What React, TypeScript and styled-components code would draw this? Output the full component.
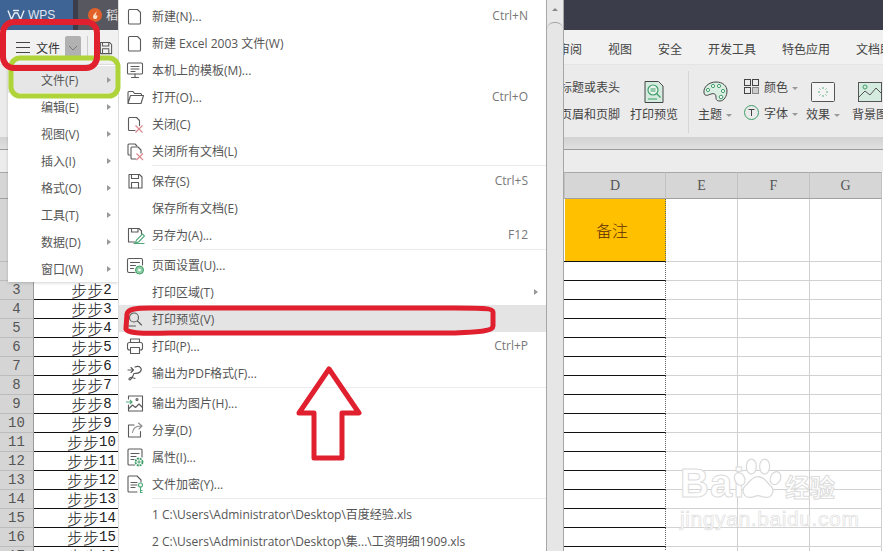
import React from 'react';
import styled, { createGlobalStyle } from 'styled-components';

const GlobalStyle = createGlobalStyle`
  html, body { margin: 0; padding: 0; background: #fff; }
  body { font-family: "Open Sans", "Noto Sans CJK SC", sans-serif; font-size: 12px; color: #555; }
`;

const Page = styled.div`
  position: relative;
  width: 887px;
  height: 551px;
  overflow: hidden;
  background: #fff;
`;

const Workspace = styled.div`
  width: 883px;
  height: 551px;
  overflow: hidden;
  display: flex;
  flex-direction: column;
`;

/* title bar */
const TitleBar = styled.div`
  height: 30px;
  flex: none;
  display: flex;
  gap: 5px;
  background: #3b3e4a;
`;

const WpsTab = styled.div`
  width: 73px;
  display: flex;
  align-items: center;
  gap: 3px;
  padding-left: 7px;
  box-sizing: border-box;
  background: #3e6495;
  color: #dfe6f0;
  font-family: "Liberation Sans", sans-serif;
  font-size: 12px;
`;

const DocTab = styled.div`
  width: 40px;
  display: flex;
  align-items: center;
  gap: 4px;
  padding-left: 10px;
  box-sizing: border-box;
  background: #56575f;
  color: #e4e4e4;
  font-size: 12px;
  white-space: nowrap;
  overflow: hidden;
`;

/* menu tabs */
const MenuTabs = styled.div`
  height: 35px;
  flex: none;
  display: flex;
  align-items: center;
  gap: 26px;
  padding: 3px 0 0 558px;
  box-sizing: border-box;
  background: #f1f1f1;
  border-bottom: 1px solid #e4e4e4;
  color: #444;
  white-space: nowrap;
`;

/* ribbon */
const Ribbon = styled.div`
  height: 72px;
  flex: none;
  display: flex;
  padding-left: 560px;
  box-sizing: border-box;
  background: #ebebeb;
  color: #444;
  white-space: nowrap;
`;

const TextStack = styled.div`
  display: flex;
  flex-direction: column;
  gap: 10px;
  padding-top: 14px;
  margin-right: 10px;
`;

const StackLabel = styled.div`
  line-height: 17px;
  display: flex;
  align-items: center;
`;

const BigButton = styled.div<{ $w: number; $mr?: number }>`
  width: ${(p) => p.$w}px;
  margin-right: ${(p) => p.$mr ?? 0}px;
  flex: none;
  display: flex;
  flex-direction: column;
  align-items: center;
  padding-top: 13px;
`;

const BigIcon = styled.div`
  height: 28px;
  display: flex;
  align-items: center;
`;

const BigLabel = styled.div`
  line-height: 18px;
  display: flex;
  align-items: center;
`;

const RibbonDivider = styled.div`
  width: 1px;
  height: 62px;
  margin: 6px 10px 0;
  background: #d6d6d6;
  flex: none;
`;

const SmallStack = styled.div`
  width: 57px;
  margin: 0 6px 0 13px;
  flex: none;
  display: flex;
  flex-direction: column;
  gap: 9px;
  padding-top: 13px;
`;

const SmallRow = styled.div`
  display: flex;
  align-items: center;
  gap: 5px;
  height: 17px;
`;

const Caret = styled.span`
  display: inline-block;
  margin-left: 4px;
  vertical-align: middle;
  border-left: 3px solid transparent;
  border-right: 3px solid transparent;
  border-top: 3px solid #999;
`;

const RibbonShade = styled.div`
  height: 13px;
  flex: none;
  box-sizing: border-box;
  background: linear-gradient(#d2d2d2, #e0e0e0);
  border-bottom: 1px solid #9b9b9b;
`;

const FormulaBar = styled.div`
  height: 22px;
  flex: none;
  background: #ececec;
`;

/* sheet */
const Sheet = styled.div`
  flex: 1;
  min-height: 0;
  overflow: hidden;
`;

const SheetRow = styled.div<{ $h: number }>`
  display: grid;
  grid-template-columns: 34px 115px 416px 101px 72px 72px 72px 1px;
  grid-template-rows: ${(p) => p.$h}px;
  height: ${(p) => p.$h}px;
`;

const ColHead = styled.div`
  display: flex;
  align-items: center;
  justify-content: center;
  box-sizing: border-box;
  background: #d6d6d6;
  border-top: 1px solid #a8a8a8;
  border-bottom: 1px solid #a0a0a0;
  border-right: 1px solid #c2c2c2;
  font-family: "Liberation Serif", serif;
  font-size: 14px;
  color: #555;
`;

const RowHead = styled.div`
  display: flex;
  align-items: center;
  justify-content: center;
  box-sizing: border-box;
  background: #d5d5d5;
  border-bottom: 1px solid #bcbcbc;
  border-right: 1px solid #9a9a9a;
  font-family: "Liberation Mono", monospace;
  font-size: 14px;
  line-height: 18px;
  color: #555;
`;

const Cell = styled.div<{ $kind?: 'data' | 'blank' | 'title' | 'edge' }>`
  display: flex;
  align-items: center;
  justify-content: center;
  min-height: 0;
  box-sizing: border-box;
  white-space: nowrap;
  line-height: 18px;
  padding-right: ${(p) => (p.$kind === 'title' ? 6 : 0)}px;
  border-bottom: 1px solid ${(p) => (p.$kind === 'blank' ? '#d2d2d2' : '#111')};
  border-right: ${(p) =>
    p.$kind === 'blank'
      ? '1px solid #cfcfcf'
      : p.$kind === 'edge' || p.$kind === 'title'
      ? '1px dotted #666'
      : '0'};
  background: ${(p) => (p.$kind === 'title' ? '#ffc000' : '#fff')};
  color: ${(p) => (p.$kind === 'title' ? '#5c2c06' : '#222')};
  font-family: "Liberation Mono", "Noto Sans CJK SC", monospace;
  font-size: 14px;
`;

const CellCjk = styled.span`
  font-family: "Noto Sans CJK SC", sans-serif;
  font-size: 16px;
  font-weight: 300;
  line-height: 18px;
`;

/* file button */
const FileButton = styled.div`
  position: absolute;
  left: 16px;
  top: 30px;
  height: 35px;
  display: flex;
  align-items: center;
  color: #333;
  font-size: 12px;
`;

const Burger = styled.span`
  width: 14px;
  height: 9px;
  margin-right: 6px;
  border-top: 1px solid #444;
  border-bottom: 1px solid #444;
  position: relative;
  &::after {
    content: '';
    position: absolute;
    left: 0;
    right: 0;
    top: 4px;
    height: 1px;
    background: #444;
  }
`;

const Chevron = styled.span`
  width: 16px;
  height: 23px;
  margin: 0 6px 0 5px;
  display: flex;
  align-items: center;
  justify-content: center;
  background: #b1b1b1;
  border-radius: 2px;
`;

const ButtonDivider = styled.span`
  width: 1px;
  height: 24px;
  margin-right: 11px;
  background: #ccc;
`;

/* left category menu */
const CategoryMenu = styled.div`
  position: absolute;
  left: 8px;
  top: 65px;
  width: 110px;
  height: 217px;
  padding-top: 1px;
  box-sizing: border-box;
  background: #fff;
  box-shadow: 0 1px 3px rgba(0, 0, 0, 0.18);
`;

const CategoryItem = styled.div<{ $active?: boolean }>`
  height: 27px;
  display: flex;
  align-items: center;
  justify-content: space-between;
  padding: 0 7px 0 33px;
  background: ${(p) => (p.$active ? '#e6e6e6' : 'transparent')};
  color: #555;
`;

const SubArrow = styled.span`
  width: 0;
  height: 0;
  border-top: 3px solid transparent;
  border-bottom: 3px solid transparent;
  border-left: 4px solid #999;
`;

/* main dropdown */
const FileMenu = styled.div`
  position: absolute;
  left: 118px;
  top: 0;
  width: 428px;
  height: 551px;
  padding-top: 2px;
  box-sizing: border-box;
  background: #fff;
  border-left: 1px solid #dcdcdc;
`;

const MenuItem = styled.div<{ $active?: boolean }>`
  height: 27px;
  display: flex;
  align-items: center;
  padding: 0 8px 0 6px;
  background: ${(p) => (p.$active ? '#e4e4e4' : 'transparent')};
  color: #555;
  white-space: nowrap;
`;

const IconSlot = styled.span`
  width: 20px;
  height: 20px;
  margin-right: 7px;
  flex: none;
  display: flex;
`;

const MenuLabel = styled.span`
  flex: 1;
`;

const Shortcut = styled.span`
  margin-right: 10px;
  color: #777;
`;

const MenuSep = styled.div`
  height: 1px;
  margin: 1px 0 1px 33px;
  background: #ececec;
`;

const Scrollbar = styled.div`
  position: absolute;
  left: 546px;
  top: 0;
  width: 18px;
  height: 551px;
  box-sizing: border-box;
  background: #e8e8e8;
  border-left: 1px solid #a6a6a6;
  border-right: 1px solid #a6a6a6;
  display: flex;
  flex-direction: column;
  align-items: center;
`;

const ScrollUp = styled.div`
  height: 22px;
  flex: none;
  padding-top: 8px;
  box-sizing: border-box;
  &::before {
    content: '';
    display: block;
    border-left: 3px solid transparent;
    border-right: 3px solid transparent;
    border-bottom: 3px solid #888;
  }
`;

const ScrollThumb = styled.div`
  flex: 1;
  width: 100%;
  box-sizing: border-box;
  border-top: 1px solid #a6a6a6;
  border-radius: 7px 7px 0 0;
  background: #e6e6e6;
`;

/* overlays */
const Annotations = styled.svg`
  position: absolute;
  left: 0;
  top: 0;
  pointer-events: none;
`;

const Watermark = styled.div`
  position: absolute;
  left: 680px;
  top: 452px;
  width: 162px;
  color: #fff;
  -webkit-text-stroke: 1px #dcdcdc;
  pointer-events: none;
  white-space: nowrap;
`;

const Paw = styled.svg`
  position: absolute;
  left: 53px;
  top: 3px;
`;

const MarkLine = styled.div`
  display: flex;
  align-items: flex-end;
  height: 56px;
`;

const MarkBai = styled.span`
  font-family: "Liberation Sans", sans-serif;
  font-weight: 700;
  font-size: 40px;
  line-height: 50px;
  letter-spacing: 1px;
  width: 70px;
`;

const MarkCn = styled.span`
  margin-left: 35px;
  font-family: "Noto Sans CJK SC", sans-serif;
  font-size: 25px;
  line-height: 44px;
  font-weight: 700;
`;

const MarkUrl = styled.div`
  font-family: "Liberation Sans", sans-serif;
  font-size: 21px;
  line-height: 22px;
  letter-spacing: 0.6px;
  -webkit-text-stroke: 0.7px #dedede;
`;

const S = { fill: 'none', stroke: '#5a5a5a', strokeWidth: 1.1, strokeLinejoin: 'round' as const, strokeLinecap: 'round' as const };
const G = { fill: 'none', stroke: '#4fa878', strokeWidth: 1.1 };
const X = { fill: 'none', stroke: '#d9868c', strokeWidth: 1.1 };

const icons: Record<string, React.ReactNode> = {
  doc: <path {...S} d="M4.500 3.500h8l3 3v10.500a1 1 0 0 1-1 1h-10a1 1 0 0 1-1-1v-12.500a1 1 0 0 1 1-1z" />,
  monitor: (
    <>
      <rect {...S} x="2.500" y="3" width="15" height="11" rx="1" />
      <path {...S} d="M6 6.500h8M6 9h8M6 11.500h4M10 14v3.500M6.500 17.500h7" />
    </>
  ),
  folder: <path {...S} d="M3 16.500v-11a1 1 0 0 1 1-1h4l1.500 2h6a1 1 0 0 1 1 1v1M3 16.500l2.500-8h13l-2.500 8z" />,
  close: (
    <>
      <path {...S} d="M10 16.500h-5.500a1 1 0 0 1-1-1v-11a1 1 0 0 1 1-1h7l3 3v5" />
      <path {...X} d="M10.500 11.500l7 7M17.500 11.500l-7 7" />
    </>
  ),
  closeAll: (
    <>
      <path {...S} d="M5 14h-1a1 1 0 0 1-1-1v-9a1 1 0 0 1 1-1h6l2 2" />
      <path {...S} d="M11 18h-4a1 1 0 0 1-1-1v-10a1 1 0 0 1 1-1h6l3 3v3" />
      <path {...X} d="M11.500 12.500l6.500 6.500M18 12.500l-6.500 6.500" />
    </>
  ),
  save: (
    <>
      <path {...S} d="M4 3.500h10.500l2.500 2.500v11h-13z" />
      <path {...S} d="M6.500 3.500v4h7v-4M6.500 17v-5.500h7v5.500" />
    </>
  ),
  saveAs: (
    <>
      <path {...S} d="M10 17h-6.500v-13.500h10.500l2.500 2.500v3" />
      <path {...S} d="M6.500 3.500v3.500h6.500v-3.500" />
      <path {...G} d="M10.500 18l1-3 6-6 2 2-6 6zM8.500 18.500h11" />
    </>
  ),
  pageSetup: (
    <>
      <path {...S} d="M10 17.500h-6a1.500 1.500 0 0 1-1.500-1.500v-11a1.500 1.500 0 0 1 1.500-1.500h12a1.500 1.500 0 0 1 1.500 1.500v5" />
      <path {...S} d="M5.500 7.500h9M5.500 10.500h5M5.500 13.500h3" />
      <circle cx="14.500" cy="15" r="4" fill="#8fcfa5" stroke="#3f9d68" />
      <circle cx="14.500" cy="15" r="1.300" fill="#fff" />
    </>
  ),
  preview: (
    <>
      <circle {...S} cx="9" cy="8.500" r="4.500" />
      <path {...S} d="M12.500 12l4 4M3.500 17h7" />
    </>
  ),
  print: (
    <>
      <path {...S} d="M5.500 6.500v-3.500h9v3.500" />
      <rect {...S} x="2.500" y="6.500" width="15" height="7.500" rx="2" />
      <rect {...S} x="5.500" y="11.500" width="9" height="6" fill="#fff" />
    </>
  ),
  pdf: (
    <>
      <path {...S} d="M3 7h5M6 4.500l2.500 2.500-2.500 2.500" />
      <path {...S} d="M10 4c5-2 8 2 5 5-1.500 1.500-4 1.500-6 1.500M9 10.500c-1 3-2 5-4 6.500-1.500 0-1.500-2 .5-2.500 2-.5 3 .5 4.500 1" />
    </>
  ),
  image: (
    <>
      <path {...S} d="M3.500 6v-3h14v15h-14v-6" />
      <path {...S} d="M3.500 16l4-4 3 2.500 3.500-3.500 3.500 3.500" />
      <circle {...S} cx="12" cy="6.500" r="1" />
      <path {...G} d="M1 9h6M5 7l2 2-2 2" />
    </>
  ),
  share: (
    <>
      <path {...S} d="M9 5h-5.500v12h12v-5.500" />
      <path {...S} d="M7.500 12.500c.5-4 3.500-6.500 8-6.500M13.500 3l3.500 3-3 3" stroke="#8a8a8a" />
    </>
  ),
  props: (
    <>
      <path {...S} d="M9.500 18h-5.500a1 1 0 0 1-1-1v-14a1 1 0 0 1 1-1h12a1 1 0 0 1 1 1v7" />
      <path {...S} d="M6 6.500h8M6 9.500h5M6 12.500h3" />
      <circle cx="14" cy="15" r="3.500" fill="none" stroke="#3f9d68" strokeWidth="1.800" strokeDasharray="2 .8" />
      <circle cx="14" cy="15" r="1.100" fill="none" stroke="#3f9d68" />
    </>
  ),
  encrypt: (
    <>
      <path {...S} d="M12 18h-8a1 1 0 0 1-1-1v-14a1 1 0 0 1 1-1h8l4 4v2" />
      <path {...S} d="M6 8.500h6M6 11h6M6 13.500h4" />
      <circle {...G} cx="15.500" cy="11" r="2" />
      <path {...G} d="M15.500 13v6M15.500 16.500h2M15.500 18.500h2" />
    </>
  ),
};

type Item = { label: string; icon?: string; shortcut?: string; sub?: boolean; active?: boolean };

const groups: Item[][] = [
  [
    { label: '新建(N)...', icon: 'doc', shortcut: 'Ctrl+N' },
    { label: '新建 Excel 2003 文件(W)', icon: 'doc' },
    { label: '本机上的模板(M)...', icon: 'monitor' },
    { label: '打开(O)...', icon: 'folder', shortcut: 'Ctrl+O' },
    { label: '关闭(C)', icon: 'close' },
    { label: '关闭所有文档(L)', icon: 'closeAll' },
  ],
  [
    { label: '保存(S)', icon: 'save', shortcut: 'Ctrl+S' },
    { label: '保存所有文档(E)' },
    { label: '另存为(A)...', icon: 'saveAs', shortcut: 'F12' },
  ],
  [
    { label: '页面设置(U)...', icon: 'pageSetup' },
    { label: '打印区域(T)', sub: true },
    { label: '打印预览(V)', icon: 'preview', active: true },
    { label: '打印(P)...', icon: 'print', shortcut: 'Ctrl+P' },
    { label: '输出为PDF格式(F)...', icon: 'pdf' },
  ],
  [
    { label: '输出为图片(H)...', icon: 'image' },
    { label: '分享(D)', icon: 'share' },
    { label: '属性(I)...', icon: 'props' },
    { label: '文件加密(Y)...', icon: 'encrypt' },
  ],
  [
    { label: '1 C:\\Users\\Administrator\\Desktop\\百度经验.xls' },
    { label: '2 C:\\Users\\Administrator\\Desktop\\集...\\工资明细1909.xls' },
  ],
];

const categories = ['文件(F)', '编辑(E)', '视图(V)', '插入(I)', '格式(O)', '工具(T)', '数据(D)', '窗口(W)'];
const tabs = ['审阅', '视图', '安全', '开发工具', '特色应用', '文档助手'];

const Blank = () => (
  <>
    <Cell $kind="blank" />
    <Cell $kind="blank" />
    <Cell $kind="blank" />
    <span />
  </>
);

export default function App() {
  const dataRows = Array.from({ length: 15 }, (_, i) => i + 3);
  return (
    <Page>
      <GlobalStyle />
      <Workspace>
        <TitleBar>
          <WpsTab>
            <svg width="18" height="12" viewBox="0 0 18 12">
              <path d="M1 1.500l3.500 9 3-6.500h3l3 6.500 3.500-9" fill="none" stroke="#e6ecf5" strokeWidth="1.400" />
              <path d="M6 1.500h6" stroke="#e6ecf5" strokeWidth="1.400" />
            </svg>
            WPS
          </WpsTab>
          <DocTab>
            <svg width="14" height="14" viewBox="0 0 14 14" style={{ flex: 'none' }}>
              <circle cx="7" cy="7" r="7" fill="#e2602a" />
              <path d="M8 2c1 3-3 4-3 7 0 2 3 3 4 1 1-2 0-3 0-3-1 1-2 1-1-1 .5-1 .5-3 0-4z" fill="#fbe3c8" />
            </svg>
            稻壳
          </DocTab>
        </TitleBar>

        <MenuTabs>
          {tabs.map((t) => (
            <span key={t}>{t}</span>
          ))}
        </MenuTabs>

        <Ribbon>
          <TextStack>
            <StackLabel>标题或表头</StackLabel>
            <StackLabel>页眉和页脚</StackLabel>
          </TextStack>
          <BigButton $w={48}>
            <BigIcon>
              <svg width="22" height="24" viewBox="0 0 22 24">
                <path d="M2 1.500h13.500l4.500 4.500v16.500h-18z" fill="#d5ebdf" stroke="#444" />
                <circle cx="10" cy="10" r="5" fill="#e9f5ee" stroke="#3f9d68" strokeWidth="1.200" />
                <path d="M7.500 9h5M7.500 11h5M13.500 13.500l4 4M5 19h9" stroke="#3f9d68" strokeWidth="1.200" />
              </svg>
            </BigIcon>
            <BigLabel>打印预览</BigLabel>
          </BigButton>
          <RibbonDivider />
          <BigButton $w={32}>
            <BigIcon>
              <svg width="26" height="22" viewBox="0 0 26 22">
                <path
                  d="M2 12C1 6 7 1 14 1s11 4 11 9-3 10-7 10-4-2-4-4c0-3-2-4-5-3s-6 3-7-1z"
                  fill="#dbeee3"
                  stroke="#444"
                />
                <circle cx="6" cy="9" r="1.600" fill="#fff" stroke="#3f9d68" />
                <circle cx="11" cy="5" r="1.600" fill="#fff" stroke="#3f9d68" />
                <circle cx="17" cy="5" r="1.600" fill="#fff" stroke="#3f9d68" />
                <circle cx="21" cy="10" r="1.600" fill="#fff" stroke="#3f9d68" />
                <circle cx="19" cy="16" r="1.800" fill="#fff" stroke="#3f9d68" />
              </svg>
            </BigIcon>
            <BigLabel>
              主题
              <Caret />
            </BigLabel>
          </BigButton>
          <SmallStack>
            <SmallRow>
              <svg width="15" height="15" viewBox="0 0 15 15">
                <g fill="none" stroke="#444">
                  <rect x=".5" y=".5" width="6" height="6" />
                  <rect x="8.500" y=".5" width="6" height="6" />
                  <rect x=".5" y="8.500" width="6" height="6" />
                </g>
                <rect x="8.500" y="8.500" width="6" height="6" fill="#ccc" stroke="#888" />
              </svg>
              <span>
                颜色
                <Caret />
              </span>
            </SmallRow>
            <SmallRow>
              <svg width="15" height="15" viewBox="0 0 15 15">
                <circle cx="7.500" cy="7.500" r="7" fill="none" stroke="#3f9d68" />
                <path d="M4.500 4.500h6M7.500 4.500v6.500" stroke="#444" fill="none" />
              </svg>
              <span>
                字体
                <Caret />
              </span>
            </SmallRow>
          </SmallStack>
          <BigButton $w={32} $mr={13}>
            <BigIcon>
              <svg width="24" height="20" viewBox="0 0 24 20">
                <rect x=".5" y=".5" width="23" height="19" rx="1" fill="#f4f4f4" stroke="#555" />
                <path
                  d="M12 5v2M12 13v2M7 10h2M15 10h2M8.500 6.500l1 1M14.500 12.500l1 1M15.500 6.500l-1 1M9.500 12.500l-1 1"
                  stroke="#5aa87f"
                />
              </svg>
            </BigIcon>
            <BigLabel>
              效果
              <Caret />
            </BigLabel>
          </BigButton>
          <BigButton $w={36}>
            <BigIcon>
              <svg width="24" height="20" viewBox="0 0 24 20">
                <rect x=".5" y=".5" width="23" height="19" fill="#d5ebdf" stroke="#555" />
                <path d="M1 15l6-6 5 4 6-7 5 5" fill="none" stroke="#555" />
                <circle cx="7" cy="5" r="2" fill="none" stroke="#3f9d68" />
              </svg>
            </BigIcon>
            <BigLabel>背景图</BigLabel>
          </BigButton>
        </Ribbon>
        <RibbonShade />
        <FormulaBar />

        <Sheet>
          <SheetRow $h={27}>
            <ColHead />
            <ColHead>A</ColHead>
            <ColHead />
            <ColHead>D</ColHead>
            <ColHead>E</ColHead>
            <ColHead>F</ColHead>
            <ColHead>G</ColHead>
            <span />
          </SheetRow>
          <SheetRow $h={63}>
            <RowHead>1</RowHead>
            <Cell $kind="data" />
            <Cell $kind="data" />
            <Cell $kind="title">
              <CellCjk>备注</CellCjk>
            </Cell>
            <Blank />
          </SheetRow>
          <SheetRow $h={19}>
            <RowHead>2</RowHead>
            <Cell $kind="data" />
            <Cell $kind="data" />
            <Cell $kind="edge" />
            <Blank />
          </SheetRow>
          {dataRows.map((n) => (
            <SheetRow key={n} $h={19}>
              <RowHead>{n}</RowHead>
              <Cell $kind="data">
                <CellCjk>步步</CellCjk>
                {n - 1}
              </Cell>
              <Cell $kind="data" />
              <Cell $kind="edge" />
              <Blank />
            </SheetRow>
          ))}
        </Sheet>
      </Workspace>

      <FileButton>
        <Burger />
        文件
        <Chevron>
          <svg width="10" height="6" viewBox="0 0 10 6">
            <path d="M1 1l4 4 4-4" fill="none" stroke="#777" />
          </svg>
        </Chevron>
        <ButtonDivider />
        <svg width="14" height="14" viewBox="0 0 20 20">
          <g {...S} strokeWidth={1.5}>
            <path d="M2 2h13l3 3v13h-16z" />
            <path d="M5 2v5h9v-5M5 18v-7h9v7" />
          </g>
        </svg>
      </FileButton>

      <CategoryMenu>
        {categories.map((c, i) => (
          <CategoryItem key={c} $active={i === 0}>
            {c}
            <SubArrow />
          </CategoryItem>
        ))}
      </CategoryMenu>

      <FileMenu>
        {groups.map((group, i) => (
          <React.Fragment key={i}>
            {i > 0 && <MenuSep />}
            {group.map((item) => (
              <MenuItem key={item.label} $active={item.active}>
                <IconSlot>
                  {item.icon && (
                    <svg width="20" height="20" viewBox="0 0 20 20">
                      {icons[item.icon]}
                    </svg>
                  )}
                </IconSlot>
                <MenuLabel>{item.label}</MenuLabel>
                {item.shortcut && <Shortcut>{item.shortcut}</Shortcut>}
                {item.sub && <SubArrow />}
              </MenuItem>
            ))}
          </React.Fragment>
        ))}
      </FileMenu>

      <Scrollbar>
        <ScrollUp />
        <ScrollThumb />
      </Scrollbar>

      <Watermark>
        <Paw width="50" height="48" viewBox="0 0 60 56">
          <g fill="#fff" stroke="#dadada" strokeWidth="1.500">
            <ellipse cx="8" cy="28" rx="6" ry="8" transform="rotate(-25 8 28)" />
            <ellipse cx="22" cy="13" rx="6" ry="9" />
            <ellipse cx="38" cy="13" rx="6" ry="9" />
            <ellipse cx="51" cy="27" rx="6" ry="8" transform="rotate(25 51 27)" />
            <path d="M30 25c8 0 10 7 15 11 6 5 2 15-6 14-4 0-6-2-9-2s-5 2-9 2c-8 1-12-9-6-14 5-4 7-11 15-11z" />
          </g>
        </Paw>
        <MarkLine>
          <MarkBai>Bai</MarkBai>
          <MarkCn>经验</MarkCn>
        </MarkLine>
        <MarkUrl>jingyan.baidu.com</MarkUrl>
      </Watermark>

      <Annotations width="887" height="551" viewBox="0 0 887 551">
        <rect x="11" y="58" width="107" height="38" rx="9" fill="none" stroke="#aed43a" strokeWidth="5" />
        <rect x="3" y="22" width="94" height="46" rx="11" fill="none" stroke="#e0202e" strokeWidth="6" />
        <path
          d="M150 308H455C480 308 493 308 493 312V326C493 331 480 332 455 333H170C140 334 125 333 126 328L127 314C128 309 135 308 150 308Z"
          fill="none"
          stroke="#e0202e"
          strokeWidth="5"
        />
        <path
          d="M329 369L359 413H342V458H314V413H299Z"
          fill="none"
          stroke="#e0202e"
          strokeWidth="5"
          strokeLinejoin="round"
        />
      </Annotations>
    </Page>
  );
}
